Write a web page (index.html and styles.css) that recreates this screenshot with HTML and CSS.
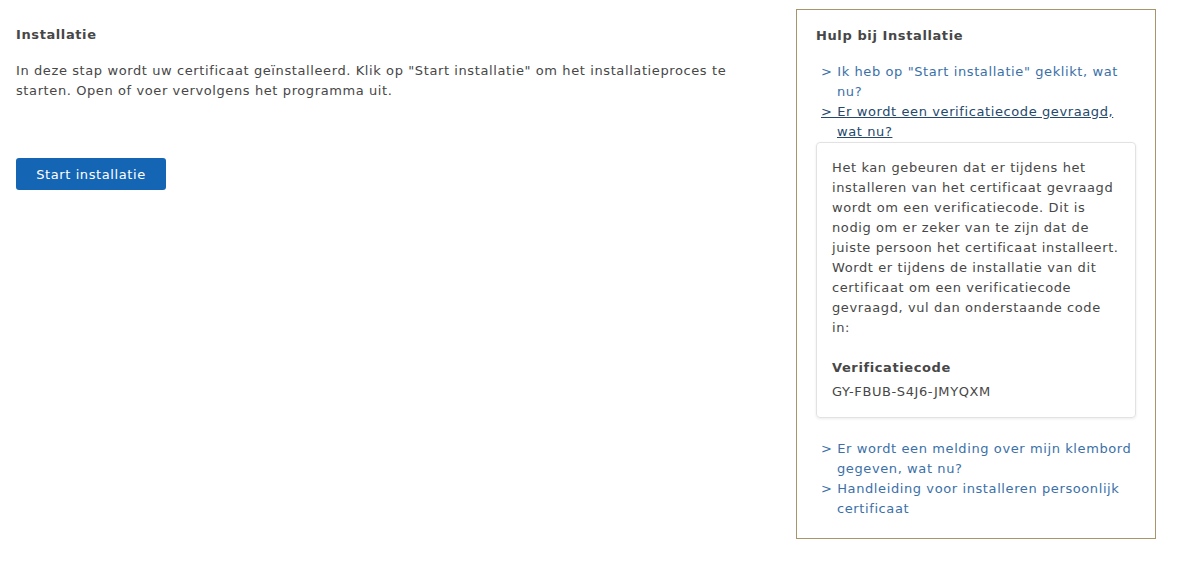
FILE: index.html
```html
<!DOCTYPE html>
<html lang="nl">
<head>
<meta charset="utf-8">
<title>Installatie</title>
<link rel="stylesheet" href="styles.css">
</head>
<body>
<div class="page">
  <main class="main">
    <h2 class="title">Installatie</h2>
    <p class="intro">In deze stap wordt uw certificaat geïnstalleerd. Klik op "Start installatie" om het installatieproces te starten. Open of voer vervolgens het programma uit.</p>
    <button class="btn">Start installatie</button>
  </main>
  <aside class="help">
    <h3 class="help-title">Hulp bij Installatie</h3>
    <ul class="links">
      <li><a href="#">&gt; Ik heb op "Start installatie" geklikt, wat nu?</a></li>
      <li><a href="#" class="active">&gt; Er wordt een verificatiecode gevraagd, wat nu?</a></li>
    </ul>
    <div class="answer">
      <p>Het kan gebeuren dat er tijdens het installeren van het certificaat gevraagd wordt om een verificatiecode. Dit is nodig om er zeker van te zijn dat de juiste persoon het certificaat installeert. Wordt er tijdens de installatie van dit certificaat om een verificatiecode gevraagd, vul dan onderstaande code in:</p>
      <h4 class="code-title">Verificatiecode</h4>
      <div class="code">GY-FBUB-S4J6-JMYQXM</div>
    </div>
    <ul class="links links-bottom">
      <li><a href="#">&gt; Er wordt een melding over mijn klembord gegeven, wat nu?</a></li>
      <li><a href="#">&gt; Handleiding voor installeren persoonlijk certificaat</a></li>
    </ul>
  </aside>
</div>
</body>
</html>
```

FILE: styles.css
```css
* { box-sizing: border-box; }
html, body { margin: 0; padding: 0; background: #fff; }
body {
  font-family: "DejaVu Sans", Verdana, sans-serif;
  font-size: 13px;
  line-height: 20px;
  letter-spacing: 0.6px;
  color: #474747;
}
.page {
  display: flex;
  align-items: flex-start;
  padding: 9px 31px 0 16px;
  gap: 40px;
}
.main {
  flex: 1;
  padding-top: 16px;
}
.title {
  margin: 0;
  font-size: 13px;
  font-weight: bold;
  line-height: 20px;
}
.intro {
  margin: 16px 0 0;
  max-width: 720px;
}
.btn {
  margin-top: 57px;
  height: 32px;
  width: 150px;
  border: none;
  border-radius: 3px;
  background: #1565b5;
  color: #fff;
  font-family: inherit;
  font-size: 13px;
  letter-spacing: 0.6px;
  padding: 0;
  cursor: pointer;
}
.help {
  width: 360px;
  flex-shrink: 0;
  border: 1px solid #a8956b;
  padding: 16px 19px 19px 19px;
}
.help-title {
  margin: 0;
  font-size: 13px;
  line-height: 20px;
  font-weight: bold;
}
.links {
  list-style: none;
  margin: 16px 0 0;
  padding: 0;
}
.links li {
  padding-left: 21px;
  text-indent: -16px;
}
.links a {
  color: #3b70a8;
  text-decoration: none;
}
.links a.active {
  color: #24496c;
  text-decoration: underline;
}
.links-bottom {
  margin-top: 21px;
}
.answer {
  border: 1px solid #e2e2e2;
  border-radius: 4px;
  box-shadow: 0 1px 3px rgba(0,0,0,0.08);
  padding: 15px 15px 15px 15px;
}
.answer p {
  margin: 0;
}
.code-title {
  margin: 20px 0 4px;
  font-size: 13px;
  line-height: 20px;
  font-weight: bold;
}
.code {
  line-height: 20px;
}
```
